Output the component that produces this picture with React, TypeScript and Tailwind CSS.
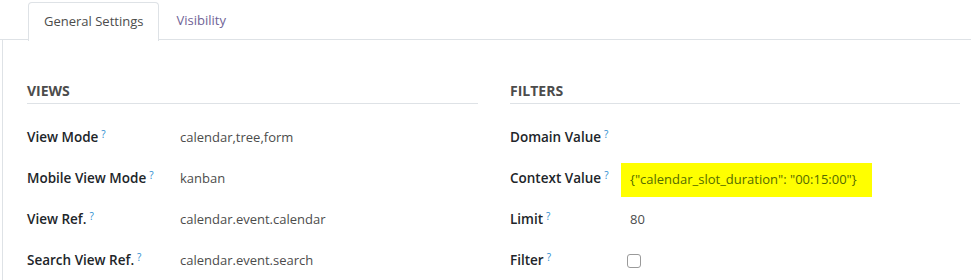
const Help = () => (
  <sup className="ml-[3px] text-[10px] font-normal text-[#2a8ccf] relative -top-[4px]">?</sup>
);

type Row = { label: string; value?: React.ReactNode };

const Field = ({ label, value, labelW }: Row & { labelW: string }) => (
  <div className="flex items-center h-[41px]">
    <div className={`${labelW} shrink-0 font-semibold text-[#212529] text-[13.5px]`}>
      {label}
      <Help />
    </div>
    <div className="text-[#4c4c4c]">{value}</div>
  </div>
);

const App = () => {
  const views: Row[] = [
    { label: "View Mode", value: "calendar,tree,form" },
    { label: "Mobile View Mode", value: "kanban" },
    { label: "View Ref.", value: "calendar.event.calendar" },
    { label: "Search View Ref.", value: "calendar.event.search" },
  ];

  return (
    <div
      className="w-[971px] h-[280px] bg-white overflow-hidden text-[13px]"
      style={{ fontFamily: '"Open Sans", "Noto Sans", sans-serif' }}
    >
      {/* tabs */}
      <div className="flex h-[40px] border-b border-[#dee2e6] pl-[28px] pt-[1px]">
        <div className="h-[39px] px-[15px] flex items-center border border-b-0 border-[#dee2e6] rounded-t-[4px] bg-white text-[#4c4c4c] relative top-[1px]">
          General Settings
        </div>
        <div className="h-[39px] px-[17px] flex items-center text-[#6f6396]">Visibility</div>
      </div>

      <div className="border-l border-[#dee2e6] ml-[2px] h-[240px] pl-[24px] pt-[42px]">
        <div className="grid grid-cols-[451px_450px] gap-[32px]">
          {/* views */}
          <div>
            <div className="font-bold text-[14px] text-[#4c4c4c] border-b border-[#dee2e6] pb-[3px] leading-[18px]">VIEWS</div>
            <div className="pt-[13px]">
              {views.map((r) => (
                <Field key={r.label} {...r} labelW="w-[153px]" />
              ))}
            </div>
          </div>

          {/* filters */}
          <div>
            <div className="font-bold text-[14px] text-[#4c4c4c] border-b border-[#dee2e6] pb-[3px] leading-[18px]">FILTERS</div>
            <div className="pt-[13px]">
              <Field label="Domain Value" labelW="w-[120px]" />
              <Field
                label="Context Value"
                labelW="w-[111px]"
                value={
                  <div className="bg-[#ffff00] h-[34px] w-[251px] pl-[9px] flex items-center text-[#556b00] relative top-[1px]">
                    {'{"calendar_slot_duration": "00:15:00"}'}
                  </div>
                }
              />
              <Field label="Limit" labelW="w-[120px]" value="80" />
              <Field
                label="Filter"
                labelW="w-[117px]"
                value={<div className="w-[14px] h-[14px] border border-[#9a9a9a] rounded-[3px] bg-white" />}
              />
            </div>
          </div>
        </div>
      </div>
    </div>
  );
};

export default App;
